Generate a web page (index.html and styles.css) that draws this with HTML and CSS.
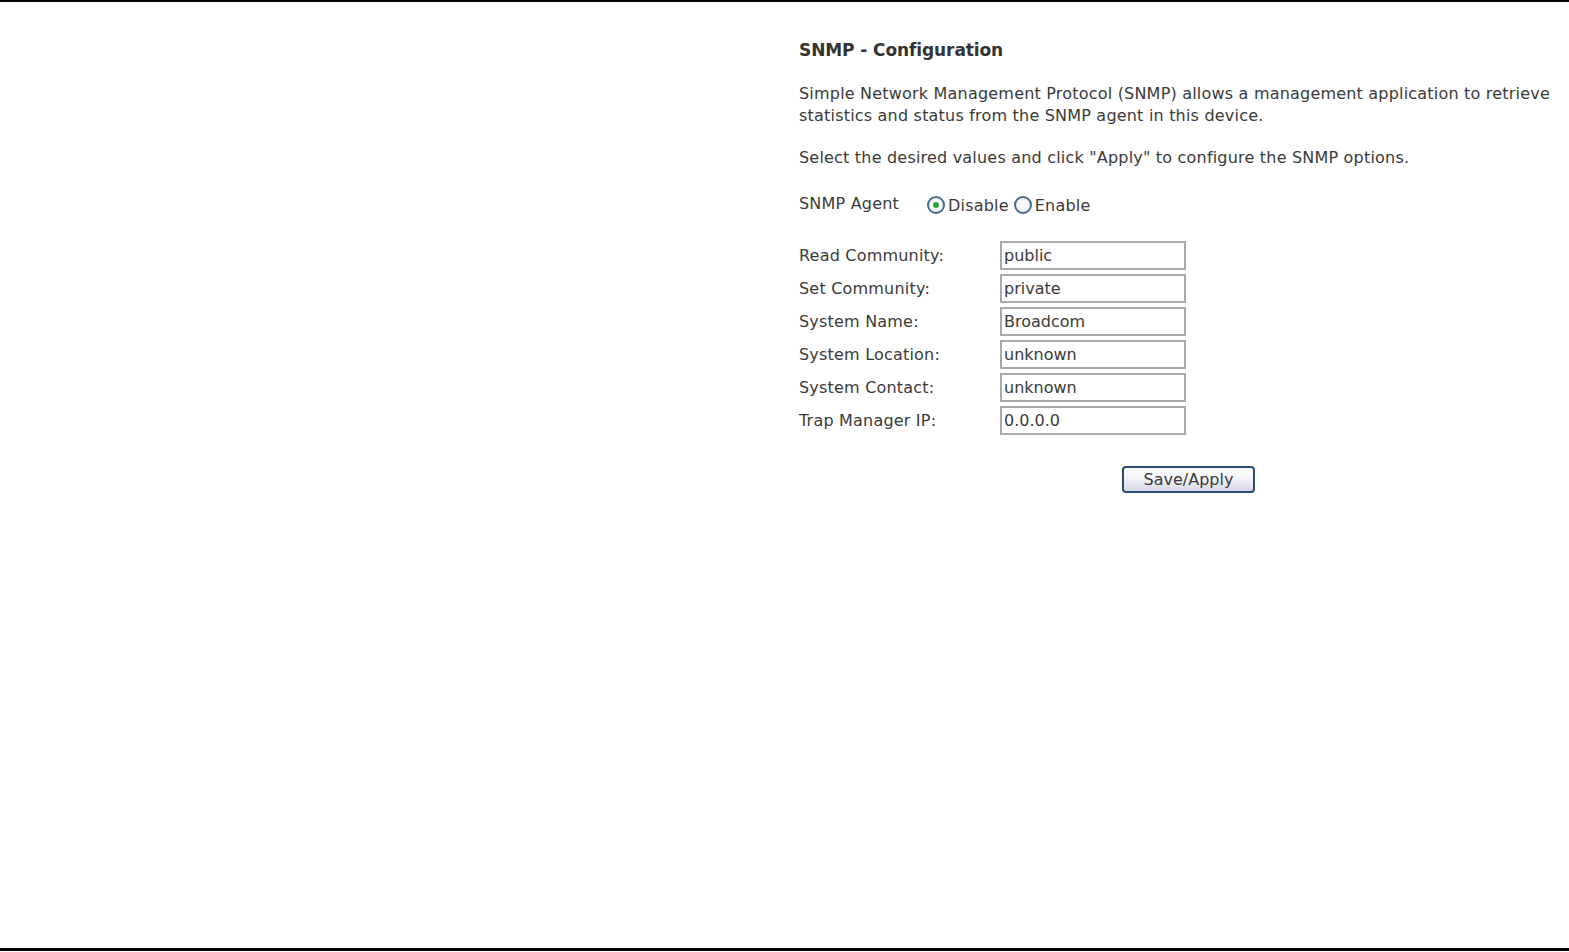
FILE: index.html
```html
<!DOCTYPE html>
<html lang="en">
<head>
    <meta charset="UTF-8">
    <title>SNMP - Configuration</title>
    <link rel="stylesheet" href="styles.css">
</head>
<body>
    <div class="page">
        <div class="side"></div>
        <main class="content">
            <h1 class="title">SNMP - Configuration</h1>
            <p>Simple Network Management Protocol (SNMP) allows a management application to retrieve<br>statistics and status from the SNMP agent in this device.</p>
            <p class="hint">Select the desired values and click "Apply" to configure the SNMP options.</p>

            <div class="agent-row">
                <span class="agent-label">SNMP Agent</span>
                <label class="radio"><span class="dot checked"></span>Disable</label>
                <label class="radio"><span class="dot"></span>Enable</label>
            </div>

            <!-- SNMP settings -->
            <div class="fields">
                <span>Read Community:</span><div class="box">public</div>
                <span>Set Community:</span><div class="box">private</div>
                <span>System Name:</span><div class="box">Broadcom</div>
                <span>System Location:</span><div class="box">unknown</div>
                <span>System Contact:</span><div class="box">unknown</div>
                <span>Trap Manager IP:</span><div class="box">0.0.0.0</div>
            </div>

            <div class="actions">
                <button class="apply">Save/Apply</button>
            </div>
        </main>
    </div>
</body>
</html>
```

FILE: styles.css
```css
html, body {
    margin: 0;
    padding: 0;
    height: 100%;
}
body {
    font-family: "DejaVu Sans", Verdana, sans-serif;
    font-size: 16px;
    letter-spacing: 0.2px;
    color: #3a3a3a;
    background-color: #ffffff;
    border-top: 2px solid #000;
    box-sizing: border-box;
}
.page {
    display: flex;
    height: 949px;
    border-bottom: 3px solid #000;
    box-sizing: border-box;
}
.side {
    width: 799px;
    flex-shrink: 0;
}
.content {
    padding-top: 37px;
}
.title {
    margin: 0 0 22px 0;
    font-size: 17px;
    letter-spacing: -0.1px;
    line-height: 22px;
    color: #333;
}
p {
    margin: 0 0 20px 0;
    line-height: 22px;
}
.hint {
    margin-bottom: 23px;
}
.agent-row {
    display: flex;
    align-items: center;
    height: 26px;
}
.agent-label {
    width: 128px;
    margin-top: -3px;
}
.radio {
    display: flex;
    align-items: center;
    margin-right: 5px;
}
.dot {
    width: 14px;
    height: 14px;
    border: 2px solid #4a6a8c;
    border-radius: 50%;
    margin-right: 3px;
    background: radial-gradient(circle, #fff 0%, #e8eef4 100%);
    display: flex;
    align-items: center;
    justify-content: center;
}
.dot.checked::after {
    content: "";
    width: 6px;
    height: 6px;
    border-radius: 50%;
    background-color: #2fa63a;
}
.fields {
    display: grid;
    grid-template-columns: 201px 186px;
    row-gap: 4px;
    margin-top: 23px;
    align-items: center;
}
.box {
    height: 29px;
    border: 2px solid #a9a9a9;
    box-sizing: border-box;
    padding-left: 2px;
    line-height: 25px;
    letter-spacing: 0;
    color: #3a3a3a;
}
.actions {
    padding-left: 323px;
    margin-top: 31px;
}
.apply {
    width: 133px;
    height: 27px;
    font-family: inherit;
    font-size: 16px;
    color: #3a3a3a;
    border: 2px solid #2c4a78;
    border-radius: 4px;
    background: linear-gradient(#ffffff 0%, #f0f0f6 55%, #d8d8e6 100%);
    padding: 0;
}
```
